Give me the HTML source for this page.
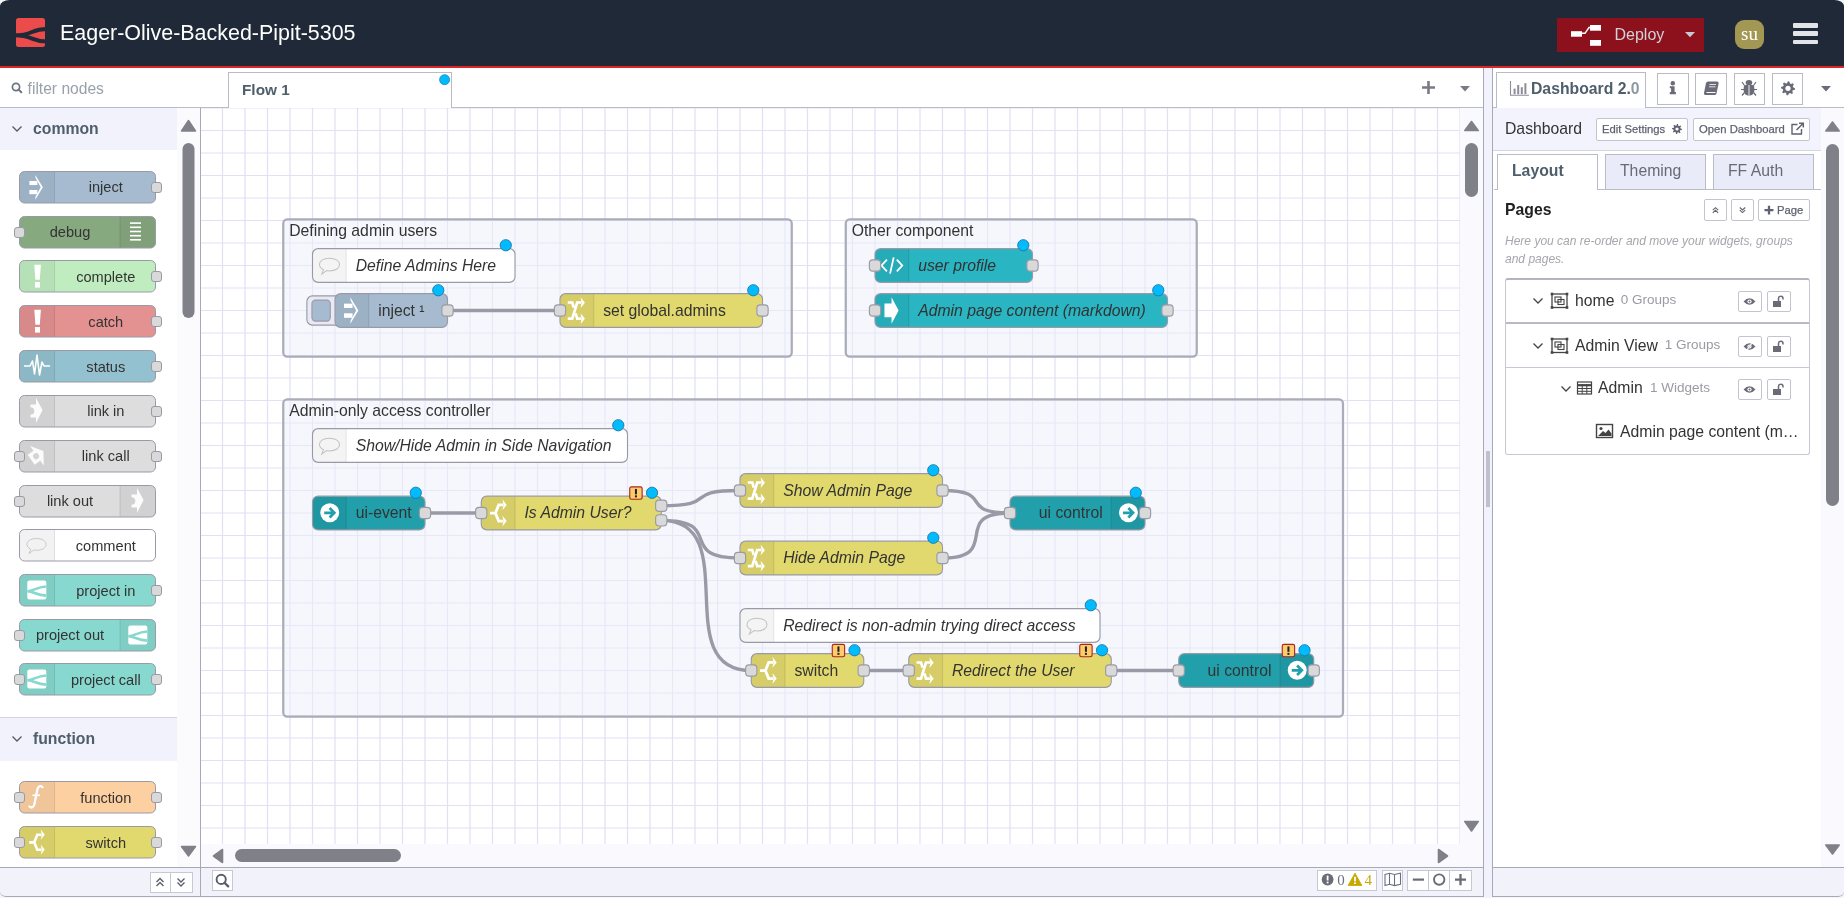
<!DOCTYPE html>
<html><head><meta charset="utf-8">
<style>

*{box-sizing:border-box;margin:0;padding:0}
html,body{width:1844px;height:898px;overflow:hidden;background:#f5f5f6;font-family:"Liberation Sans",sans-serif;color:#555}
.a{position:absolute}
#hdr{left:0;top:0;width:1844px;height:66px;background:#1f2937;border-radius:9.5px 9.5px 0 0 / 5.8px 5.8px 0 0}
#redl{left:0;top:66px;width:1844px;height:2px;background:#dc2626}
#title{left:60px;top:21.2px;font-size:21.45px;color:#fff;white-space:nowrap;letter-spacing:0}
/* palette */
#pal{left:0;top:108px;width:201px;height:759px;background:#fff;border-right:1px solid #a8a8b8}
#psearch{left:0;top:68px;width:201px;height:40px;background:#fff;border-bottom:1px solid #bbbbc8}
.cat{left:0;width:177px;background:#f3f3fa}
.cat span{position:absolute;left:33px;font-size:16px;font-weight:bold;color:#4f5b66}
.pn{position:absolute;left:19px;width:137px;height:32px;border:1px solid #999aa5;border-radius:5px}
.pn .ic{position:absolute;top:0;bottom:0;width:35px;background:rgba(0,0,0,0.05)}
.pn .lb{position:absolute;top:0;font-size:15.5px;color:#333;line-height:30px;white-space:nowrap}
.pt{position:absolute;width:11px;height:11px;background:#d9d9d9;border:1px solid #999aa5;border-radius:3px}
/* tabs */
#tabs{left:200px;top:68px;width:1283px;height:40px;background:#fff;border-bottom:1px solid #bbbbc8}
#tab1{left:228px;top:72px;width:224px;height:36px;background:#fff;border:1px solid #bbbbc8;border-bottom:none}
/* canvas */
#cv{left:201px;top:108px;width:1282px;height:759px;background:#fff;border-right:1px solid #a8a8b8}
#cfoot{left:201px;top:867px;width:1283px;height:30px;background:#f2f2fb;border-top:1px solid #a8a8b8;border-bottom:1px solid #a8a8b8}
#pfoot{left:0;top:867px;width:201px;height:30px;background:#f2f2fb;border-bottom-left-radius:6px 5px;border-top:1px solid #a8a8b8;border-bottom:1px solid #a8a8b8;border-right:1px solid #a8a8b8}
#sep{left:1483px;top:68px;width:10px;height:829px;background:#f1f2fb;border-left:1px solid #a8a8b8;border-right:1px solid #a8a8b8}
/* sidebar */
#sb{left:1493px;top:68px;width:351px;height:799px;background:#fff}
#sfoot{left:1493px;top:867px;width:351px;height:30px;background:#f2f2fb;border-bottom-right-radius:6px 5px;border-top:1px solid #a8a8b8;border-bottom:1px solid #a8a8b8}
.btn{position:absolute;background:#fff;border:1px solid #bbbbc8;border-radius:2px}

#pscroll{left:177px;top:108px;width:23px;height:759px;background:#fbfbfe}
</style></head><body>
<div id="root" style="position:absolute;left:0;top:0;width:1844px;height:898px;will-change:transform">

<div class="a" id="hdr"></div>
<div class="a" id="redl"></div>
<div class="a" id="title">Eager-Olive-Backed-Pipit-5305</div>

<svg class="a" style="left:0;top:0" width="60" height="66"><rect x="16" y="18" width="29" height="29" rx="2.5" fill="#ec4b4b"/><path d="M14,35.3 C34,35.3 30,29 47,29 M14,35.3 C34,35.3 30,41.4 47,41.4" stroke="#1f2937" stroke-width="4" fill="none"/></svg>
<div class="a" style="left:1557px;top:18px;width:147px;height:34px;background:#8c111c"></div>
<svg class="a" style="left:1557px;top:18px" width="147" height="34"><rect x="14" y="13.2" width="11" height="5.5" fill="#fff"/><rect x="33" y="7" width="11" height="5.7" fill="#fff"/><rect x="33" y="22" width="11" height="5.8" fill="#fff"/><path d="M25,15.3 L28,15.3 L32,9.5 L33.5,9.5" stroke="#fff" stroke-width="1.4" fill="none"/><path d="M128,14 L138,14 L133,19.2Z" fill="#c8c9d1"/></svg>
<div class="a" style="left:1614.5px;top:25px;font-size:16px;color:#d1d2d8;line-height:19px">Deploy</div>
<div class="a" style="left:1735px;top:20px;width:29px;height:29px;border-radius:9px;background:#a29853;color:#fff;font-family:'Liberation Serif',serif;font-size:19px;line-height:27px;text-align:center">su</div>
<div class="a" style="left:1793px;top:23px;width:25px;height:4.6px;background:#e3e4e8;border-radius:1px"></div>
<div class="a" style="left:1793px;top:31.3px;width:25px;height:4.6px;background:#e3e4e8;border-radius:1px"></div>
<div class="a" style="left:1793px;top:39.6px;width:25px;height:4.6px;background:#e3e4e8;border-radius:1px"></div>
<div class="a" id="pal"></div>
<div class="a" id="psearch"></div>
<div class="a" id="tabs"></div>
<div class="a" id="tab1"></div>
<div class="a" id="cv"></div>
<div class="a" id="pfoot"></div>
<div class="a" id="cfoot"></div>
<div class="a" id="sep"></div>
<div class="a" id="sb"></div>
<div class="a" id="sfoot"></div>
<div class="a" id="pscroll"></div>
<svg class="a" style="left:9px;top:80px" width="16" height="16"><circle cx="7" cy="7" r="3.6" fill="none" stroke="#6b7280" stroke-width="1.7"/><path d="M9.6,9.6 L12.3,12.3" stroke="#6b7280" stroke-width="2" stroke-linecap="round"/></svg>
<div class="a" style="left:27.6px;top:79.7px;font-size:15.6px;color:#9aa0aa;line-height:18px">filter nodes</div>
<div class="a" style="left:0;top:108px;width:177px;height:42px;background:#f2f2fc;"></div>
<svg class="a" style="left:10px;top:124px" width="14" height="10"><path d="M2.5,2.5 L7,7 L11.5,2.5" fill="none" stroke="#4f5b66" stroke-width="1.3"/></svg>
<div class="a" style="left:33px;top:119.8px;font-size:15.75px;font-weight:bold;color:#4e5e6a;line-height:18px">common</div>
<div class="a" style="left:0;top:717px;width:177px;height:44px;background:#f2f2fc;border-top:1px solid #d4d4e0;"></div>
<svg class="a" style="left:10px;top:734px" width="14" height="10"><path d="M2.5,2.5 L7,7 L11.5,2.5" fill="none" stroke="#4f5b66" stroke-width="1.3"/></svg>
<div class="a" style="left:33px;top:729.8px;font-size:15.75px;font-weight:bold;color:#4e5e6a;line-height:18px">function</div>
<svg class="a" style="left:19px;top:170.5px;overflow:visible" width="137" height="33"><rect x="0.5" y="0.5" width="136" height="31.5" rx="5" fill="#a6bbcf" stroke="#999aa6" stroke-width="1"/><path d="M5.5,1 L35.5,1 L35.5,31.5 L5.5,31.5 Q1,31.5 1,27 L1,5.5 Q1,1 5.5,1Z" fill="#000" fill-opacity="0.05"/><line x1="35.5" y1="1" x2="35.5" y2="31.5" stroke="#000" stroke-opacity="0.1" stroke-width="1"/><g><g transform="translate(2,0.6) scale(1.05)"><rect x="8" y="8.9" width="7.6" height="3.9" fill="#fff"/><rect x="8" y="17.5" width="7.6" height="4" fill="#fff"/><path d="M13.6,3.2 L20.8,15 L13.6,26.8 L13.9,23.8 L18.8,15 L13.9,6.2Z" fill="#fff"/></g></g></svg>
<div class="a" style="left:105.8px;top:178.0px;width:0;text-align:center"><span style="position:absolute;left:0;transform:translateX(-50%);white-space:nowrap;font-size:14.6px;color:#333;line-height:18px">inject</span></div>
<div class="a" style="left:151px;top:181.5px;width:11px;height:11px;background:#d9d9d9;border:1px solid #999aa6;border-radius:3px"></div>
<svg class="a" style="left:19px;top:215.6px;overflow:visible" width="137" height="33"><rect x="0.5" y="0.5" width="136" height="31.5" rx="5" fill="#87a980" stroke="#999aa6" stroke-width="1"/><path d="M101,1 L131.5,1 Q136,1 136,5.5 L136,27 Q136,31.5 131.5,31.5 L101,31.5Z" fill="#000" fill-opacity="0.05"/><line x1="101" y1="1" x2="101" y2="31.5" stroke="#000" stroke-opacity="0.1" stroke-width="1"/><g transform="translate(101,0)"><rect x="10" y="6.3" width="11" height="1.6" fill="#fff"/><rect x="10" y="10.5" width="11" height="1.6" fill="#fff"/><rect x="10" y="14.7" width="11" height="1.6" fill="#fff"/><rect x="10" y="18.9" width="11" height="1.6" fill="#fff"/><rect x="10" y="23.0" width="11" height="1.6" fill="#fff"/></g></svg>
<div class="a" style="left:70.0px;top:223.1px;width:0;text-align:center"><span style="position:absolute;left:0;transform:translateX(-50%);white-space:nowrap;font-size:14.6px;color:#333;line-height:18px">debug</span></div>
<div class="a" style="left:14px;top:226.6px;width:11px;height:11px;background:#d9d9d9;border:1px solid #999aa6;border-radius:3px"></div>
<svg class="a" style="left:19px;top:260.4px;overflow:visible" width="137" height="33"><rect x="0.5" y="0.5" width="136" height="31.5" rx="5" fill="#c0edc0" stroke="#999aa6" stroke-width="1"/><path d="M5.5,1 L35.5,1 L35.5,31.5 L5.5,31.5 Q1,31.5 1,27 L1,5.5 Q1,1 5.5,1Z" fill="#000" fill-opacity="0.05"/><line x1="35.5" y1="1" x2="35.5" y2="31.5" stroke="#000" stroke-opacity="0.1" stroke-width="1"/><g><path d="M15.3,4.7 L21.9,4.7 L20.8,19.8 L16.4,19.8Z" fill="#fff"/><rect x="16" y="22" width="5" height="5.6" fill="#fff"/></g></svg>
<div class="a" style="left:105.8px;top:267.9px;width:0;text-align:center"><span style="position:absolute;left:0;transform:translateX(-50%);white-space:nowrap;font-size:14.6px;color:#333;line-height:18px">complete</span></div>
<div class="a" style="left:151px;top:271.4px;width:11px;height:11px;background:#d9d9d9;border:1px solid #999aa6;border-radius:3px"></div>
<svg class="a" style="left:19px;top:305.3px;overflow:visible" width="137" height="33"><rect x="0.5" y="0.5" width="136" height="31.5" rx="5" fill="#e49191" stroke="#999aa6" stroke-width="1"/><path d="M5.5,1 L35.5,1 L35.5,31.5 L5.5,31.5 Q1,31.5 1,27 L1,5.5 Q1,1 5.5,1Z" fill="#000" fill-opacity="0.05"/><line x1="35.5" y1="1" x2="35.5" y2="31.5" stroke="#000" stroke-opacity="0.1" stroke-width="1"/><g><path d="M15.3,4.7 L21.9,4.7 L20.8,19.8 L16.4,19.8Z" fill="#fff"/><rect x="16" y="22" width="5" height="5.6" fill="#fff"/></g></svg>
<div class="a" style="left:105.8px;top:312.8px;width:0;text-align:center"><span style="position:absolute;left:0;transform:translateX(-50%);white-space:nowrap;font-size:14.6px;color:#333;line-height:18px">catch</span></div>
<div class="a" style="left:151px;top:316.3px;width:11px;height:11px;background:#d9d9d9;border:1px solid #999aa6;border-radius:3px"></div>
<svg class="a" style="left:19px;top:350.1px;overflow:visible" width="137" height="33"><rect x="0.5" y="0.5" width="136" height="31.5" rx="5" fill="#94c1d0" stroke="#999aa6" stroke-width="1"/><path d="M5.5,1 L35.5,1 L35.5,31.5 L5.5,31.5 Q1,31.5 1,27 L1,5.5 Q1,1 5.5,1Z" fill="#000" fill-opacity="0.05"/><line x1="35.5" y1="1" x2="35.5" y2="31.5" stroke="#000" stroke-opacity="0.1" stroke-width="1"/><g><polyline points="5,16 11,16 13.5,11 15.5,24 18,5 20.5,25 23,12 25,16 31,16" fill="none" stroke="#fff" stroke-width="1.6" stroke-linejoin="round"/></g></svg>
<div class="a" style="left:105.8px;top:357.6px;width:0;text-align:center"><span style="position:absolute;left:0;transform:translateX(-50%);white-space:nowrap;font-size:14.6px;color:#333;line-height:18px">status</span></div>
<div class="a" style="left:151px;top:361.1px;width:11px;height:11px;background:#d9d9d9;border:1px solid #999aa6;border-radius:3px"></div>
<svg class="a" style="left:19px;top:394.9px;overflow:visible" width="137" height="33"><rect x="0.5" y="0.5" width="136" height="31.5" rx="5" fill="#dddddd" stroke="#999aa6" stroke-width="1"/><path d="M5.5,1 L35.5,1 L35.5,31.5 L5.5,31.5 Q1,31.5 1,27 L1,5.5 Q1,1 5.5,1Z" fill="#000" fill-opacity="0.05"/><line x1="35.5" y1="1" x2="35.5" y2="31.5" stroke="#000" stroke-opacity="0.1" stroke-width="1"/><g><path d="M17,3 L23.6,15 L17,28 L17,22.5 L11.5,22.5 L11.5,19.8 A3.8,3.8 0 0 0 11.5,12.2 L11.5,9.4 L17,9.4Z" fill="#fff" opacity="0.92"/></g></svg>
<div class="a" style="left:105.8px;top:402.4px;width:0;text-align:center"><span style="position:absolute;left:0;transform:translateX(-50%);white-space:nowrap;font-size:14.6px;color:#333;line-height:18px">link in</span></div>
<div class="a" style="left:151px;top:405.9px;width:11px;height:11px;background:#d9d9d9;border:1px solid #999aa6;border-radius:3px"></div>
<svg class="a" style="left:19px;top:439.7px;overflow:visible" width="137" height="33"><rect x="0.5" y="0.5" width="136" height="31.5" rx="5" fill="#dddddd" stroke="#999aa6" stroke-width="1"/><path d="M5.5,1 L35.5,1 L35.5,31.5 L5.5,31.5 Q1,31.5 1,27 L1,5.5 Q1,1 5.5,1Z" fill="#000" fill-opacity="0.05"/><line x1="35.5" y1="1" x2="35.5" y2="31.5" stroke="#000" stroke-opacity="0.1" stroke-width="1"/><g><g transform="rotate(-35 17.5 16)"><path d="M18,4 L26,16 L18,28 L18,22 L11,22 L11,10 L18,10Z" fill="#fff" opacity="0.9"/><circle cx="17" cy="16" r="3" fill="#d4d4d4"/></g></g></svg>
<div class="a" style="left:105.8px;top:447.2px;width:0;text-align:center"><span style="position:absolute;left:0;transform:translateX(-50%);white-space:nowrap;font-size:14.6px;color:#333;line-height:18px">link call</span></div>
<div class="a" style="left:14px;top:450.7px;width:11px;height:11px;background:#d9d9d9;border:1px solid #999aa6;border-radius:3px"></div>
<div class="a" style="left:151px;top:450.7px;width:11px;height:11px;background:#d9d9d9;border:1px solid #999aa6;border-radius:3px"></div>
<svg class="a" style="left:19px;top:484.5px;overflow:visible" width="137" height="33"><rect x="0.5" y="0.5" width="136" height="31.5" rx="5" fill="#dddddd" stroke="#999aa6" stroke-width="1"/><path d="M101,1 L131.5,1 Q136,1 136,5.5 L136,27 Q136,31.5 131.5,31.5 L101,31.5Z" fill="#000" fill-opacity="0.05"/><line x1="101" y1="1" x2="101" y2="31.5" stroke="#000" stroke-opacity="0.1" stroke-width="1"/><g transform="translate(101,0)"><path d="M17,3 L23.6,15 L17,28 L17,22.5 L11.5,22.5 L11.5,19.8 A3.8,3.8 0 0 0 11.5,12.2 L11.5,9.4 L17,9.4Z" fill="#fff" opacity="0.92"/></g></svg>
<div class="a" style="left:70.0px;top:492.0px;width:0;text-align:center"><span style="position:absolute;left:0;transform:translateX(-50%);white-space:nowrap;font-size:14.6px;color:#333;line-height:18px">link out</span></div>
<div class="a" style="left:14px;top:495.5px;width:11px;height:11px;background:#d9d9d9;border:1px solid #999aa6;border-radius:3px"></div>
<svg class="a" style="left:19px;top:529.3px;overflow:visible" width="137" height="33"><rect x="0.5" y="0.5" width="136" height="31.5" rx="5" fill="#ffffff" stroke="#999aa6" stroke-width="1"/><path d="M5.5,1 L35.5,1 L35.5,31.5 L5.5,31.5 Q1,31.5 1,27 L1,5.5 Q1,1 5.5,1Z" fill="#000" fill-opacity="0.05"/><line x1="35.5" y1="1" x2="35.5" y2="31.5" stroke="#000" stroke-opacity="0.1" stroke-width="1"/><g><path d="M17.5,9.5 C24,9.5 27,12.5 27,15.5 C27,18.5 23.5,21.3 17.5,21.3 C16.5,21.3 15.6,21.2 14.8,21 L10,24.5 L11.8,20.2 C9.3,19 8,17.4 8,15.5 C8,12.5 11,9.5 17.5,9.5Z" fill="none" stroke="#c8c8c8" stroke-width="1"/></g></svg>
<div class="a" style="left:105.8px;top:536.8px;width:0;text-align:center"><span style="position:absolute;left:0;transform:translateX(-50%);white-space:nowrap;font-size:14.6px;color:#333;line-height:18px">comment</span></div>
<svg class="a" style="left:19px;top:574.0px;overflow:visible" width="137" height="33"><rect x="0.5" y="0.5" width="136" height="31.5" rx="5" fill="#87d8cf" stroke="#999aa6" stroke-width="1"/><path d="M5.5,1 L35.5,1 L35.5,31.5 L5.5,31.5 Q1,31.5 1,27 L1,5.5 Q1,1 5.5,1Z" fill="#000" fill-opacity="0.05"/><line x1="35.5" y1="1" x2="35.5" y2="31.5" stroke="#000" stroke-opacity="0.1" stroke-width="1"/><g><rect x="8.3" y="6.6" width="19" height="19" rx="2" fill="#fff"/><path d="M8.3,17.2 C14.5,17.2 17,13 27.3,12.5 M8.3,17.2 C14.5,17.2 17,21 27.3,21.6" stroke="#87d8cf" stroke-width="2.6" fill="none"/></g></svg>
<div class="a" style="left:105.8px;top:581.5px;width:0;text-align:center"><span style="position:absolute;left:0;transform:translateX(-50%);white-space:nowrap;font-size:14.6px;color:#333;line-height:18px">project in</span></div>
<div class="a" style="left:151px;top:585.0px;width:11px;height:11px;background:#d9d9d9;border:1px solid #999aa6;border-radius:3px"></div>
<svg class="a" style="left:19px;top:618.6px;overflow:visible" width="137" height="33"><rect x="0.5" y="0.5" width="136" height="31.5" rx="5" fill="#87d8cf" stroke="#999aa6" stroke-width="1"/><path d="M101,1 L131.5,1 Q136,1 136,5.5 L136,27 Q136,31.5 131.5,31.5 L101,31.5Z" fill="#000" fill-opacity="0.05"/><line x1="101" y1="1" x2="101" y2="31.5" stroke="#000" stroke-opacity="0.1" stroke-width="1"/><g transform="translate(101,0)"><rect x="8.3" y="6.6" width="19" height="19" rx="2" fill="#fff"/><path d="M8.3,17.2 C14.5,17.2 17,13 27.3,12.5 M8.3,17.2 C14.5,17.2 17,21 27.3,21.6" stroke="#87d8cf" stroke-width="2.6" fill="none"/></g></svg>
<div class="a" style="left:70.0px;top:626.1px;width:0;text-align:center"><span style="position:absolute;left:0;transform:translateX(-50%);white-space:nowrap;font-size:14.6px;color:#333;line-height:18px">project out</span></div>
<div class="a" style="left:14px;top:629.6px;width:11px;height:11px;background:#d9d9d9;border:1px solid #999aa6;border-radius:3px"></div>
<svg class="a" style="left:19px;top:663.4px;overflow:visible" width="137" height="33"><rect x="0.5" y="0.5" width="136" height="31.5" rx="5" fill="#87d8cf" stroke="#999aa6" stroke-width="1"/><path d="M5.5,1 L35.5,1 L35.5,31.5 L5.5,31.5 Q1,31.5 1,27 L1,5.5 Q1,1 5.5,1Z" fill="#000" fill-opacity="0.05"/><line x1="35.5" y1="1" x2="35.5" y2="31.5" stroke="#000" stroke-opacity="0.1" stroke-width="1"/><g><rect x="8.3" y="6.6" width="19" height="19" rx="2" fill="#fff"/><path d="M8.3,17.2 C14.5,17.2 17,13 27.3,12.5 M8.3,17.2 C14.5,17.2 17,21 27.3,21.6" stroke="#87d8cf" stroke-width="2.6" fill="none"/></g></svg>
<div class="a" style="left:105.8px;top:670.9px;width:0;text-align:center"><span style="position:absolute;left:0;transform:translateX(-50%);white-space:nowrap;font-size:14.6px;color:#333;line-height:18px">project call</span></div>
<div class="a" style="left:14px;top:674.4px;width:11px;height:11px;background:#d9d9d9;border:1px solid #999aa6;border-radius:3px"></div>
<div class="a" style="left:151px;top:674.4px;width:11px;height:11px;background:#d9d9d9;border:1px solid #999aa6;border-radius:3px"></div>
<svg class="a" style="left:19px;top:781.2px;overflow:visible" width="137" height="33"><rect x="0.5" y="0.5" width="136" height="31.5" rx="5" fill="#fdd0a2" stroke="#999aa6" stroke-width="1"/><path d="M5.5,1 L35.5,1 L35.5,31.5 L5.5,31.5 Q1,31.5 1,27 L1,5.5 Q1,1 5.5,1Z" fill="#000" fill-opacity="0.05"/><line x1="35.5" y1="1" x2="35.5" y2="31.5" stroke="#000" stroke-opacity="0.1" stroke-width="1"/><g><path d="M23.5,6.2 C21.8,4.3 19.3,5 18.5,8 L15.3,23.5 C14.6,26.5 12.3,27.3 10.5,25.5" fill="none" stroke="#fff" stroke-width="2.3" stroke-linecap="round"/><path d="M13.5,14.3 L21,14.3" stroke="#fff" stroke-width="1.8"/></g></svg>
<div class="a" style="left:105.8px;top:788.7px;width:0;text-align:center"><span style="position:absolute;left:0;transform:translateX(-50%);white-space:nowrap;font-size:14.6px;color:#333;line-height:18px">function</span></div>
<div class="a" style="left:14px;top:792.2px;width:11px;height:11px;background:#d9d9d9;border:1px solid #999aa6;border-radius:3px"></div>
<div class="a" style="left:151px;top:792.2px;width:11px;height:11px;background:#d9d9d9;border:1px solid #999aa6;border-radius:3px"></div>
<svg class="a" style="left:19px;top:826.3px;overflow:visible" width="137" height="33"><rect x="0.5" y="0.5" width="136" height="31.5" rx="5" fill="#e2d96e" stroke="#999aa6" stroke-width="1"/><path d="M5.5,1 L35.5,1 L35.5,31.5 L5.5,31.5 Q1,31.5 1,27 L1,5.5 Q1,1 5.5,1Z" fill="#000" fill-opacity="0.05"/><line x1="35.5" y1="1" x2="35.5" y2="31.5" stroke="#000" stroke-opacity="0.1" stroke-width="1"/><g><g transform="translate(2,0.5) scale(1.05)"><path d="M7.8,15.1 L12.6,15.1 L15.5,7.8 L19.5,7.8 M12.6,15.1 L15.5,22.2 L19.5,22.2" fill="none" stroke="#fff" stroke-width="2.5"/><path d="M18.8,2.8 L22.6,7.8 L18.8,12.6 L19.8,7.8Z M18.8,17.2 L22.6,22.2 L18.8,27 L19.8,22.2Z" fill="#fff"/></g></g></svg>
<div class="a" style="left:105.8px;top:833.8px;width:0;text-align:center"><span style="position:absolute;left:0;transform:translateX(-50%);white-space:nowrap;font-size:14.6px;color:#333;line-height:18px">switch</span></div>
<div class="a" style="left:14px;top:837.3px;width:11px;height:11px;background:#d9d9d9;border:1px solid #999aa6;border-radius:3px"></div>
<div class="a" style="left:151px;top:837.3px;width:11px;height:11px;background:#d9d9d9;border:1px solid #999aa6;border-radius:3px"></div>
<svg class="a" style="left:177px;top:108px" width="23" height="759"><path d="M11.5,12.5 L18.5,23 L4.5,23Z" fill="#808089" stroke="#808089" stroke-width="1.5" stroke-linejoin="round"/><rect x="5.5" y="35" width="12" height="175" rx="6" fill="#808089"/><path d="M4.5,738.5 L18.5,738.5 L11.5,748Z" fill="#808089" stroke="#808089" stroke-width="1.5" stroke-linejoin="round"/></svg>
<div class="a" style="left:150px;top:872px;width:42.5px;height:20.5px;background:#fff;border:1px solid #c8c8d4"></div><div class="a" style="left:170px;top:872px;width:1px;height:20.5px;background:#c8c8d4"></div>
<svg class="a" style="left:150px;top:872px" width="43" height="21"><path d="M6.5,10 L10,6.5 L13.5,10 M6.5,14 L10,10.5 L13.5,14" fill="none" stroke="#555e6a" stroke-width="1.3"/><path d="M27.5,6.5 L31,10 L34.5,6.5 M27.5,10.5 L31,14 L34.5,10.5" fill="none" stroke="#555e6a" stroke-width="1.3"/></svg>
<svg class="a" style="left:200px;top:108px;font-family:'Liberation Sans',sans-serif" width="1260" height="736"><g transform="scale(1.125)"><path d="M20 0V654 M40 0V654 M60 0V654 M80 0V654 M100 0V654 M120 0V654 M140 0V654 M160 0V654 M180 0V654 M200 0V654 M220 0V654 M240 0V654 M260 0V654 M280 0V654 M300 0V654 M320 0V654 M340 0V654 M360 0V654 M380 0V654 M400 0V654 M420 0V654 M440 0V654 M460 0V654 M480 0V654 M500 0V654 M520 0V654 M540 0V654 M560 0V654 M580 0V654 M600 0V654 M620 0V654 M640 0V654 M660 0V654 M680 0V654 M700 0V654 M720 0V654 M740 0V654 M760 0V654 M780 0V654 M800 0V654 M820 0V654 M840 0V654 M860 0V654 M880 0V654 M900 0V654 M920 0V654 M940 0V654 M960 0V654 M980 0V654 M1000 0V654 M1020 0V654 M1040 0V654 M1060 0V654 M1080 0V654 M1100 0V654 M1120 0V654 M0.9 0H1120 M0.9 20H1120 M0.9 40H1120 M0.9 60H1120 M0.9 80H1120 M0.9 100H1120 M0.9 120H1120 M0.9 140H1120 M0.9 160H1120 M0.9 180H1120 M0.9 200H1120 M0.9 220H1120 M0.9 240H1120 M0.9 260H1120 M0.9 280H1120 M0.9 300H1120 M0.9 320H1120 M0.9 340H1120 M0.9 360H1120 M0.9 380H1120 M0.9 400H1120 M0.9 420H1120 M0.9 440H1120 M0.9 460H1120 M0.9 480H1120 M0.9 500H1120 M0.9 520H1120 M0.9 540H1120 M0.9 560H1120 M0.9 580H1120 M0.9 600H1120 M0.9 620H1120 M0.9 640H1120" stroke="#e0e1f4" stroke-width="1.08" fill="none"/><rect x="74" y="99" width="452" height="122" rx="3.6" fill="rgb(237,239,249)" fill-opacity="0.5" stroke="#abacb9" stroke-width="2"/><text x="79.3" y="113.6" font-size="14" fill="#333">Defining admin users</text><rect x="574" y="99" width="312" height="122" rx="3.6" fill="rgb(237,239,249)" fill-opacity="0.5" stroke="#abacb9" stroke-width="2"/><text x="579.3" y="113.6" font-size="14" fill="#333">Other component</text><rect x="74" y="259" width="942" height="282" rx="3.6" fill="rgb(237,239,249)" fill-opacity="0.5" stroke="#abacb9" stroke-width="2"/><text x="79.3" y="273.6" font-size="14" fill="#333">Admin-only access controller</text><path d="M220 180 C295 180 245 180 320 180" fill="none" stroke="#999aa6" stroke-width="3"/><path d="M200 360 C237.5 360 212.5 360 250 360" fill="none" stroke="#999aa6" stroke-width="3"/><path d="M410 353.5 C463.467 353.5 426.533 340 480 340" fill="none" stroke="#999aa6" stroke-width="3"/><path d="M410 366.5 C468.202 366.5 421.798 400 480 400" fill="none" stroke="#999aa6" stroke-width="3"/><path d="M410 366.5 C485 366.5 415 500 490 500" fill="none" stroke="#999aa6" stroke-width="3"/><path d="M660 340 C707.434 340 672.566 360 720 360" fill="none" stroke="#999aa6" stroke-width="3"/><path d="M660 400 C714.083 400 665.917 360 720 360" fill="none" stroke="#999aa6" stroke-width="3"/><path d="M590 500 C620 500 600 500 630 500" fill="none" stroke="#999aa6" stroke-width="3"/><path d="M810 500 C855 500 825 500 870 500" fill="none" stroke="#999aa6" stroke-width="3"/><g transform="translate(100,125)"><rect x="0" y="0" width="180" height="30" rx="5" fill="#fff" stroke="#999aa6" stroke-width="1"/><path d="M5,0.5 L30,0.5 L30,29.5 L5,29.5 Q0.5,29.5 0.5,25 L0.5,5 Q0.5,0.5 5,0.5Z" fill="#000" fill-opacity="0.045"/><line x1="30" y1="0.5" x2="30" y2="29.5" stroke="#000" stroke-opacity="0.08" stroke-width="1"/><path d="M15,8.5 C21,8.5 24,11.2 24,14.2 C24,17.2 21,19.8 15,19.8 C14.1,19.8 13.3,19.7 12.6,19.5 L8.3,22.6 L9.8,18.8 C7.5,17.7 6.2,16.1 6.2,14.2 C6.2,11.2 9.2,8.5 15,8.5Z" fill="none" stroke="#c2c2c2" stroke-width="0.9"/><text x="38.4" y="19.9" font-size="14" fill="#333" font-style="italic">Define Admins Here</text><circle cx="171.80" cy="-3.00" r="5" fill="#00bcff" stroke="#1877a8" stroke-width="0.8"/></g><g transform="translate(120,165)"><rect x="-25" y="2" width="32" height="26" rx="5" fill="#e8e9f5" stroke="#999aa6" stroke-width="1"/><rect x="-20.5" y="5.8" width="16.3" height="18.6" rx="3.2" fill="#a6bbcf" stroke="#999aa6" stroke-width="1"/></g><g transform="translate(120,165)"><rect x="0" y="0" width="100" height="30" rx="5" fill="#a6bbcf" stroke="#999aa6" stroke-width="1"/><path d="M5,0.5 L30,0.5 L30,29.5 L5,29.5 Q0.5,29.5 0.5,25 L0.5,5 Q0.5,0.5 5,0.5Z" fill="#000" fill-opacity="0.05"/><line x1="30" y1="0.5" x2="30" y2="29.5" stroke="#000" stroke-opacity="0.1" stroke-width="1"/><rect x="8" y="8.9" width="7.6" height="3.9" fill="#fff"/><rect x="8" y="17.5" width="7.6" height="4" fill="#fff"/><path d="M13.6,3.2 L20.8,15 L13.6,26.8 L13.9,23.8 L18.8,15 L13.9,6.2Z" fill="#fff"/><text x="38.4" y="19.5" font-size="14" fill="#333">inject ¹</text><rect x="95.00" y="10.00" width="10" height="10" rx="3" fill="#d9d9d9" stroke="#999aa6" stroke-width="1"/><circle cx="91.80" cy="-3.00" r="5" fill="#00bcff" stroke="#1877a8" stroke-width="0.8"/></g><g transform="translate(320,165)"><rect x="0" y="0" width="180" height="30" rx="5" fill="#e2d96e" stroke="#999aa6" stroke-width="1"/><path d="M5,0.5 L30,0.5 L30,29.5 L5,29.5 Q0.5,29.5 0.5,25 L0.5,5 Q0.5,0.5 5,0.5Z" fill="#000" fill-opacity="0.05"/><line x1="30" y1="0.5" x2="30" y2="29.5" stroke="#000" stroke-opacity="0.1" stroke-width="1"/><path d="M6.9,22.3 L10.9,22.3 L15.3,7.9 L19,7.9" fill="none" stroke="#fff" stroke-width="2.4"/><path d="M6.9,7.9 L10.9,7.9 L12.3,12.5 M13.9,17.6 L15.3,22.3 L19,22.3" fill="none" stroke="#fff" stroke-width="2.4"/><path d="M18.3,3.2 L22.2,8 L18.3,12.8 L19.2,8Z M18.3,17.5 L22.2,22.3 L18.3,27.1 L19.2,22.3Z" fill="#fff"/><text x="38.4" y="19.5" font-size="14" fill="#333">set global.admins</text><rect x="-5.00" y="10.00" width="10" height="10" rx="3" fill="#d9d9d9" stroke="#999aa6" stroke-width="1"/><rect x="175.00" y="10.00" width="10" height="10" rx="3" fill="#d9d9d9" stroke="#999aa6" stroke-width="1"/><circle cx="171.80" cy="-3.00" r="5" fill="#00bcff" stroke="#1877a8" stroke-width="0.8"/></g><g transform="translate(600,125)"><rect x="0" y="0" width="140" height="30" rx="5" fill="#29b5c2" stroke="#999aa6" stroke-width="1"/><path d="M5,0.5 L30,0.5 L30,29.5 L5,29.5 Q0.5,29.5 0.5,25 L0.5,5 Q0.5,0.5 5,0.5Z" fill="#000" fill-opacity="0.05"/><line x1="30" y1="0.5" x2="30" y2="29.5" stroke="#000" stroke-opacity="0.1" stroke-width="1"/><path d="M10.6,9.8 L5.8,15 L10.6,20.2 M19.4,9.8 L24.2,15 L19.4,20.2 M16.6,7.8 L13.4,22.2" fill="none" stroke="#fff" stroke-width="1.6"/><text x="38.4" y="19.5" font-size="14" fill="#333" font-style="italic">user profile</text><rect x="-5.00" y="10.00" width="10" height="10" rx="3" fill="#d9d9d9" stroke="#999aa6" stroke-width="1"/><rect x="135.00" y="10.00" width="10" height="10" rx="3" fill="#d9d9d9" stroke="#999aa6" stroke-width="1"/><circle cx="131.80" cy="-3.00" r="5" fill="#00bcff" stroke="#1877a8" stroke-width="0.8"/></g><g transform="translate(600,165)"><rect x="0" y="0" width="260" height="30" rx="5" fill="#29b5c2" stroke="#999aa6" stroke-width="1"/><path d="M5,0.5 L30,0.5 L30,29.5 L5,29.5 Q0.5,29.5 0.5,25 L0.5,5 Q0.5,0.5 5,0.5Z" fill="#000" fill-opacity="0.05"/><line x1="30" y1="0.5" x2="30" y2="29.5" stroke="#000" stroke-opacity="0.1" stroke-width="1"/><path d="M8.4,8.8 L14.7,8.8 L14.7,3.2 L21,15 L14.7,26.8 L14.7,21 L8.4,21Z" fill="#fff"/><text x="38.4" y="19.5" font-size="14" fill="#333" font-style="italic">Admin page content (markdown)</text><rect x="-5.00" y="10.00" width="10" height="10" rx="3" fill="#d9d9d9" stroke="#999aa6" stroke-width="1"/><rect x="255.00" y="10.00" width="10" height="10" rx="3" fill="#d9d9d9" stroke="#999aa6" stroke-width="1"/><circle cx="251.80" cy="-3.00" r="5" fill="#00bcff" stroke="#1877a8" stroke-width="0.8"/></g><g transform="translate(100,285)"><rect x="0" y="0" width="280" height="30" rx="5" fill="#fff" stroke="#999aa6" stroke-width="1"/><path d="M5,0.5 L30,0.5 L30,29.5 L5,29.5 Q0.5,29.5 0.5,25 L0.5,5 Q0.5,0.5 5,0.5Z" fill="#000" fill-opacity="0.045"/><line x1="30" y1="0.5" x2="30" y2="29.5" stroke="#000" stroke-opacity="0.08" stroke-width="1"/><path d="M15,8.5 C21,8.5 24,11.2 24,14.2 C24,17.2 21,19.8 15,19.8 C14.1,19.8 13.3,19.7 12.6,19.5 L8.3,22.6 L9.8,18.8 C7.5,17.7 6.2,16.1 6.2,14.2 C6.2,11.2 9.2,8.5 15,8.5Z" fill="none" stroke="#c2c2c2" stroke-width="0.9"/><text x="38.4" y="19.9" font-size="14" fill="#333" font-style="italic">Show/Hide Admin in Side Navigation</text><circle cx="271.80" cy="-3.00" r="5" fill="#00bcff" stroke="#1877a8" stroke-width="0.8"/></g><g transform="translate(100,345)"><rect x="0" y="0" width="100" height="30" rx="5" fill="#21a0ab" stroke="#999aa6" stroke-width="1"/><path d="M5,0.5 L30,0.5 L30,29.5 L5,29.5 Q0.5,29.5 0.5,25 L0.5,5 Q0.5,0.5 5,0.5Z" fill="#000" fill-opacity="0.05"/><line x1="30" y1="0.5" x2="30" y2="29.5" stroke="#000" stroke-opacity="0.1" stroke-width="1"/><circle cx="15.3" cy="14.8" r="8.4" fill="#fff"/><path d="M10.4,14.8 L19.2,14.8 M15.2,10.6 L19.4,14.8 L15.2,19" fill="none" stroke="#21a0ab" stroke-width="2.4" stroke-linejoin="miter"/><text x="38.4" y="19.5" font-size="14" fill="#333">ui-event</text><rect x="95.00" y="10.00" width="10" height="10" rx="3" fill="#d9d9d9" stroke="#999aa6" stroke-width="1"/><circle cx="91.80" cy="-3.00" r="5" fill="#00bcff" stroke="#1877a8" stroke-width="0.8"/></g><g transform="translate(250,345)"><rect x="0" y="0" width="160" height="30" rx="5" fill="#e2d96e" stroke="#999aa6" stroke-width="1"/><path d="M5,0.5 L30,0.5 L30,29.5 L5,29.5 Q0.5,29.5 0.5,25 L0.5,5 Q0.5,0.5 5,0.5Z" fill="#000" fill-opacity="0.05"/><line x1="30" y1="0.5" x2="30" y2="29.5" stroke="#000" stroke-opacity="0.1" stroke-width="1"/><path d="M7.8,15.1 L12.6,15.1 L15.5,7.8 L19.5,7.8 M12.6,15.1 L15.5,22.2 L19.5,22.2" fill="none" stroke="#fff" stroke-width="2.5" stroke-linejoin="miter"/><path d="M18.8,2.8 L22.6,7.8 L18.8,12.6 L19.8,7.8Z M18.8,17.2 L22.6,22.2 L18.8,27 L19.8,22.2Z" fill="#fff"/><text x="38.4" y="19.5" font-size="14" fill="#333" font-style="italic">Is Admin User?</text><rect x="-5.00" y="10.00" width="10" height="10" rx="3" fill="#d9d9d9" stroke="#999aa6" stroke-width="1"/><rect x="155.00" y="3.50" width="10" height="10" rx="3" fill="#d9d9d9" stroke="#999aa6" stroke-width="1"/><rect x="155.00" y="16.50" width="10" height="10" rx="3" fill="#d9d9d9" stroke="#999aa6" stroke-width="1"/><g transform="translate(132.00,-8.20)"><rect x="0" y="0" width="11" height="11" rx="1.5" fill="#ffcb6b" stroke="#a8261c" stroke-width="1"/><rect x="4.6" y="1.8" width="1.8" height="4.8" fill="#222"/><rect x="4.6" y="7.5" width="1.8" height="1.8" fill="#222"/></g><circle cx="151.80" cy="-3.00" r="5" fill="#00bcff" stroke="#1877a8" stroke-width="0.8"/></g><g transform="translate(480,325)"><rect x="0" y="0" width="180" height="30" rx="5" fill="#e2d96e" stroke="#999aa6" stroke-width="1"/><path d="M5,0.5 L30,0.5 L30,29.5 L5,29.5 Q0.5,29.5 0.5,25 L0.5,5 Q0.5,0.5 5,0.5Z" fill="#000" fill-opacity="0.05"/><line x1="30" y1="0.5" x2="30" y2="29.5" stroke="#000" stroke-opacity="0.1" stroke-width="1"/><path d="M6.9,22.3 L10.9,22.3 L15.3,7.9 L19,7.9" fill="none" stroke="#fff" stroke-width="2.4"/><path d="M6.9,7.9 L10.9,7.9 L12.3,12.5 M13.9,17.6 L15.3,22.3 L19,22.3" fill="none" stroke="#fff" stroke-width="2.4"/><path d="M18.3,3.2 L22.2,8 L18.3,12.8 L19.2,8Z M18.3,17.5 L22.2,22.3 L18.3,27.1 L19.2,22.3Z" fill="#fff"/><text x="38.4" y="19.5" font-size="14" fill="#333" font-style="italic">Show Admin Page</text><rect x="-5.00" y="10.00" width="10" height="10" rx="3" fill="#d9d9d9" stroke="#999aa6" stroke-width="1"/><rect x="175.00" y="10.00" width="10" height="10" rx="3" fill="#d9d9d9" stroke="#999aa6" stroke-width="1"/><circle cx="171.80" cy="-3.00" r="5" fill="#00bcff" stroke="#1877a8" stroke-width="0.8"/></g><g transform="translate(480,385)"><rect x="0" y="0" width="180" height="30" rx="5" fill="#e2d96e" stroke="#999aa6" stroke-width="1"/><path d="M5,0.5 L30,0.5 L30,29.5 L5,29.5 Q0.5,29.5 0.5,25 L0.5,5 Q0.5,0.5 5,0.5Z" fill="#000" fill-opacity="0.05"/><line x1="30" y1="0.5" x2="30" y2="29.5" stroke="#000" stroke-opacity="0.1" stroke-width="1"/><path d="M6.9,22.3 L10.9,22.3 L15.3,7.9 L19,7.9" fill="none" stroke="#fff" stroke-width="2.4"/><path d="M6.9,7.9 L10.9,7.9 L12.3,12.5 M13.9,17.6 L15.3,22.3 L19,22.3" fill="none" stroke="#fff" stroke-width="2.4"/><path d="M18.3,3.2 L22.2,8 L18.3,12.8 L19.2,8Z M18.3,17.5 L22.2,22.3 L18.3,27.1 L19.2,22.3Z" fill="#fff"/><text x="38.4" y="19.5" font-size="14" fill="#333" font-style="italic">Hide Admin Page</text><rect x="-5.00" y="10.00" width="10" height="10" rx="3" fill="#d9d9d9" stroke="#999aa6" stroke-width="1"/><rect x="175.00" y="10.00" width="10" height="10" rx="3" fill="#d9d9d9" stroke="#999aa6" stroke-width="1"/><circle cx="171.80" cy="-3.00" r="5" fill="#00bcff" stroke="#1877a8" stroke-width="0.8"/></g><g transform="translate(720,345)"><rect x="0" y="0" width="120" height="30" rx="5" fill="#21a0ab" stroke="#999aa6" stroke-width="1"/><path d="M90,0.5 L115,0.5 Q119.5,0.5 119.5,5 L119.5,25 Q119.5,29.5 115,29.5 L90,29.5Z" fill="#000" fill-opacity="0.05"/><line x1="90" y1="0.5" x2="90" y2="29.5" stroke="#000" stroke-opacity="0.1" stroke-width="1"/><g transform="translate(90,0)"><circle cx="15.3" cy="14.8" r="8.4" fill="#fff"/><path d="M10.4,14.8 L19.2,14.8 M15.2,10.6 L19.4,14.8 L15.2,19" fill="none" stroke="#21a0ab" stroke-width="2.4" stroke-linejoin="miter"/></g><text x="82.4" y="19.5" font-size="14" fill="#333" text-anchor="end">ui control</text><rect x="-5.00" y="10.00" width="10" height="10" rx="3" fill="#d9d9d9" stroke="#999aa6" stroke-width="1"/><rect x="115.00" y="10.00" width="10" height="10" rx="3" fill="#d9d9d9" stroke="#999aa6" stroke-width="1"/><circle cx="111.80" cy="-3.00" r="5" fill="#00bcff" stroke="#1877a8" stroke-width="0.8"/></g><g transform="translate(480,445)"><rect x="0" y="0" width="320" height="30" rx="5" fill="#fff" stroke="#999aa6" stroke-width="1"/><path d="M5,0.5 L30,0.5 L30,29.5 L5,29.5 Q0.5,29.5 0.5,25 L0.5,5 Q0.5,0.5 5,0.5Z" fill="#000" fill-opacity="0.045"/><line x1="30" y1="0.5" x2="30" y2="29.5" stroke="#000" stroke-opacity="0.08" stroke-width="1"/><path d="M15,8.5 C21,8.5 24,11.2 24,14.2 C24,17.2 21,19.8 15,19.8 C14.1,19.8 13.3,19.7 12.6,19.5 L8.3,22.6 L9.8,18.8 C7.5,17.7 6.2,16.1 6.2,14.2 C6.2,11.2 9.2,8.5 15,8.5Z" fill="none" stroke="#c2c2c2" stroke-width="0.9"/><text x="38.4" y="19.9" font-size="14" fill="#333" font-style="italic">Redirect is non-admin trying direct access</text><circle cx="311.80" cy="-3.00" r="5" fill="#00bcff" stroke="#1877a8" stroke-width="0.8"/></g><g transform="translate(490,485)"><rect x="0" y="0" width="100" height="30" rx="5" fill="#e2d96e" stroke="#999aa6" stroke-width="1"/><path d="M5,0.5 L30,0.5 L30,29.5 L5,29.5 Q0.5,29.5 0.5,25 L0.5,5 Q0.5,0.5 5,0.5Z" fill="#000" fill-opacity="0.05"/><line x1="30" y1="0.5" x2="30" y2="29.5" stroke="#000" stroke-opacity="0.1" stroke-width="1"/><path d="M7.8,15.1 L12.6,15.1 L15.5,7.8 L19.5,7.8 M12.6,15.1 L15.5,22.2 L19.5,22.2" fill="none" stroke="#fff" stroke-width="2.5" stroke-linejoin="miter"/><path d="M18.8,2.8 L22.6,7.8 L18.8,12.6 L19.8,7.8Z M18.8,17.2 L22.6,22.2 L18.8,27 L19.8,22.2Z" fill="#fff"/><text x="38.4" y="19.5" font-size="14" fill="#333">switch</text><rect x="-5.00" y="10.00" width="10" height="10" rx="3" fill="#d9d9d9" stroke="#999aa6" stroke-width="1"/><rect x="95.00" y="10.00" width="10" height="10" rx="3" fill="#d9d9d9" stroke="#999aa6" stroke-width="1"/><g transform="translate(72.00,-8.20)"><rect x="0" y="0" width="11" height="11" rx="1.5" fill="#ffcb6b" stroke="#a8261c" stroke-width="1"/><rect x="4.6" y="1.8" width="1.8" height="4.8" fill="#222"/><rect x="4.6" y="7.5" width="1.8" height="1.8" fill="#222"/></g><circle cx="91.80" cy="-3.00" r="5" fill="#00bcff" stroke="#1877a8" stroke-width="0.8"/></g><g transform="translate(630,485)"><rect x="0" y="0" width="180" height="30" rx="5" fill="#e2d96e" stroke="#999aa6" stroke-width="1"/><path d="M5,0.5 L30,0.5 L30,29.5 L5,29.5 Q0.5,29.5 0.5,25 L0.5,5 Q0.5,0.5 5,0.5Z" fill="#000" fill-opacity="0.05"/><line x1="30" y1="0.5" x2="30" y2="29.5" stroke="#000" stroke-opacity="0.1" stroke-width="1"/><path d="M6.9,22.3 L10.9,22.3 L15.3,7.9 L19,7.9" fill="none" stroke="#fff" stroke-width="2.4"/><path d="M6.9,7.9 L10.9,7.9 L12.3,12.5 M13.9,17.6 L15.3,22.3 L19,22.3" fill="none" stroke="#fff" stroke-width="2.4"/><path d="M18.3,3.2 L22.2,8 L18.3,12.8 L19.2,8Z M18.3,17.5 L22.2,22.3 L18.3,27.1 L19.2,22.3Z" fill="#fff"/><text x="38.4" y="19.5" font-size="14" fill="#333" font-style="italic">Redirect the User</text><rect x="-5.00" y="10.00" width="10" height="10" rx="3" fill="#d9d9d9" stroke="#999aa6" stroke-width="1"/><rect x="175.00" y="10.00" width="10" height="10" rx="3" fill="#d9d9d9" stroke="#999aa6" stroke-width="1"/><g transform="translate(152.00,-8.20)"><rect x="0" y="0" width="11" height="11" rx="1.5" fill="#ffcb6b" stroke="#a8261c" stroke-width="1"/><rect x="4.6" y="1.8" width="1.8" height="4.8" fill="#222"/><rect x="4.6" y="7.5" width="1.8" height="1.8" fill="#222"/></g><circle cx="171.80" cy="-3.00" r="5" fill="#00bcff" stroke="#1877a8" stroke-width="0.8"/></g><g transform="translate(870,485)"><rect x="0" y="0" width="120" height="30" rx="5" fill="#21a0ab" stroke="#999aa6" stroke-width="1"/><path d="M90,0.5 L115,0.5 Q119.5,0.5 119.5,5 L119.5,25 Q119.5,29.5 115,29.5 L90,29.5Z" fill="#000" fill-opacity="0.05"/><line x1="90" y1="0.5" x2="90" y2="29.5" stroke="#000" stroke-opacity="0.1" stroke-width="1"/><g transform="translate(90,0)"><circle cx="15.3" cy="14.8" r="8.4" fill="#fff"/><path d="M10.4,14.8 L19.2,14.8 M15.2,10.6 L19.4,14.8 L15.2,19" fill="none" stroke="#21a0ab" stroke-width="2.4" stroke-linejoin="miter"/></g><text x="82.4" y="19.5" font-size="14" fill="#333" text-anchor="end">ui control</text><rect x="-5.00" y="10.00" width="10" height="10" rx="3" fill="#d9d9d9" stroke="#999aa6" stroke-width="1"/><rect x="115.00" y="10.00" width="10" height="10" rx="3" fill="#d9d9d9" stroke="#999aa6" stroke-width="1"/><g transform="translate(92.00,-8.20)"><rect x="0" y="0" width="11" height="11" rx="1.5" fill="#ffcb6b" stroke="#a8261c" stroke-width="1"/><rect x="4.6" y="1.8" width="1.8" height="4.8" fill="#222"/><rect x="4.6" y="7.5" width="1.8" height="1.8" fill="#222"/></g><circle cx="111.80" cy="-3.00" r="5" fill="#00bcff" stroke="#1877a8" stroke-width="0.8"/></g></g></svg>
<div class="a" style="left:242px;top:80.8px;font-size:15.35px;font-weight:bold;color:#4e5e6a;line-height:18px">Flow 1</div>
<svg class="a" style="left:430px;top:68px" width="30" height="25"><circle cx="14.6" cy="11.7" r="5" fill="#00bcff" stroke="#1a86b8" stroke-width="0.8"/></svg>
<svg class="a" style="left:1415px;top:75px" width="60" height="25"><path d="M13.5,6 V19 M7,12.5 H20" stroke="#7a7a85" stroke-width="2.6"/><path d="M45,11 L55,11 L50,16.5Z" fill="#7a7a85"/></svg>
<div class="a" style="left:1460px;top:108px;width:23px;height:759px;background:#fafafe"></div>
<div class="a" style="left:201px;top:844px;width:1259px;height:23px;background:#fafafe"></div>
<svg class="a" style="left:1460px;top:108px" width="23" height="740"><path d="M11.5,13.5 L18.2,22.5 L4.8,22.5Z" fill="#808089" stroke="#808089" stroke-width="1.6" stroke-linejoin="round"/><rect x="5" y="35" width="13" height="54" rx="6.5" fill="#808089"/><path d="M4.8,713.5 L18.2,713.5 L11.5,723Z" fill="#808089" stroke="#808089" stroke-width="1.6" stroke-linejoin="round"/></svg>
<svg class="a" style="left:201px;top:844px" width="1259" height="23"><path d="M12.5,12 L21.5,5.5 L21.5,18.5Z" fill="#808089" stroke="#808089" stroke-width="1.6" stroke-linejoin="round"/><rect x="34" y="5" width="166" height="13" rx="6.5" fill="#808089"/><path d="M1246.5,12 L1237.5,5.5 L1237.5,18.5Z" fill="#808089" stroke="#808089" stroke-width="1.6" stroke-linejoin="round"/></svg>
<div class="a" style="left:212px;top:870px;width:21px;height:21px;background:#fff;border:1px solid #c8c8d4"></div>
<svg class="a" style="left:212px;top:870px" width="21" height="21"><circle cx="9.2" cy="9.4" r="4.6" fill="none" stroke="#555e6a" stroke-width="1.9"/><path d="M12.5,12.7 L16.2,16.4" stroke="#555e6a" stroke-width="2.3" stroke-linecap="round"/></svg>
<div class="a" style="left:1317px;top:870px;width:60px;height:21px;background:#fff;border:1px solid #c8c8d4"></div>
<div class="a" style="left:1382px;top:870px;width:21px;height:21px;background:#fff;border:1px solid #c8c8d4"></div>
<div class="a" style="left:1407px;top:870px;width:65px;height:21px;background:#fff;border:1px solid #c8c8d4"></div><div class="a" style="left:1428px;top:870px;width:1px;height:21px;background:#c8c8d4"></div><div class="a" style="left:1449px;top:870px;width:1px;height:21px;background:#c8c8d4"></div>
<svg class="a" style="left:1317px;top:869.2px" width="160" height="22"><circle cx="10.6" cy="10.5" r="5.9" fill="#6b6b78"/><rect x="9.7" y="6.6" width="1.8" height="4.9" fill="#fff"/><rect x="9.7" y="12.6" width="1.8" height="1.8" fill="#fff"/><text x="20.2" y="15.6" font-size="15" fill="#6b7080" font-family="Liberation Serif">0</text><path d="M31.2,16.4 L38,4.2 L44.8,16.4Z" fill="#c8a800" stroke="#c8a800" stroke-width="0.9" stroke-linejoin="round"/><rect x="37.1" y="7.8" width="1.8" height="4.6" fill="#fff"/><rect x="37.1" y="13.4" width="1.8" height="1.6" fill="#fff"/><text x="47.6" y="15.6" font-size="15" fill="#c8a800" font-family="Liberation Serif">4</text><path d="M68,5.5 L72.5,4.2 L77.5,5.5 L83.5,4.2 L83.5,15.2 L77.5,16.6 L72.5,15.2 L68,16.6Z M72.5,4.2 V15.2 M77.5,5.5 V16.6" fill="none" stroke="#6b7080" stroke-width="1.1"/><path d="M95.8,10.6 H107" stroke="#6b6b78" stroke-width="2.2"/><circle cx="122.2" cy="10.6" r="5.2" fill="none" stroke="#6b6b78" stroke-width="1.9"/><path d="M138,10.6 H149 M143.5,5 V16.2" stroke="#6b6b78" stroke-width="2.3"/></svg>
<div class="a" style="left:1493px;top:68px;width:351px;height:40px;background:#fff;border-bottom:1px solid #bbbbc8"></div>
<div class="a" style="left:1496px;top:72px;width:150px;height:36px;background:#fff;border:1px solid #bbbbc8;border-bottom:none"></div>
<svg class="a" style="left:1509px;top:80px" width="22" height="17"><path d="M1.5,1 V15.3 H20" fill="none" stroke="#8d8d99" stroke-width="1.1"/><rect x="4.6" y="8.6" width="2" height="5.6" fill="#8d8d99"/><rect x="8.2" y="5" width="2" height="9.2" fill="#8d8d99"/><rect x="11.8" y="7.2" width="2" height="7" fill="#8d8d99"/><rect x="15.4" y="3.2" width="2" height="11" fill="#8d8d99"/></svg>
<div class="a" style="left:1531px;top:80px;font-size:15.75px;font-weight:bold;color:#4e5e6a;line-height:18px;white-space:nowrap">Dashboard 2.<span style="color:#8d9aa3">0</span></div>
<div class="a" style="left:1657px;top:73px;width:32px;height:32px;background:#fff;border:1px solid #bbbbc8"></div>
<div class="a" style="left:1695px;top:73px;width:32px;height:32px;background:#fff;border:1px solid #bbbbc8"></div>
<div class="a" style="left:1734px;top:73px;width:31px;height:32px;background:#fff;border:1px solid #bbbbc8"></div>
<div class="a" style="left:1772px;top:73px;width:31px;height:32px;background:#fff;border:1px solid #bbbbc8"></div>
<svg class="a" style="left:1650px;top:68px" width="194" height="40"><circle cx="22.8" cy="15.2" r="2.2" fill="#6b6b78"/><path d="M19.8,18.3 H24.6 V23.9 H25.9 V26.2 H19.8 V23.9 H21.1 V20.2 H19.8Z" fill="#6b6b78"/><path d="M58,13.5 L67,13.5 Q69,13.5 68.6,15.5 L66.5,25.5 Q66,27 64.5,27 L55.5,27 Q53.5,27 54,25 L56,15 Q56.5,13.5 58,13.5Z" fill="#6b6b78"/><path d="M56.5,24.5 L65.5,24.5" stroke="#fff" stroke-width="1"/><path d="M59.5,16.5 L66,16.5 M59,18.8 L65.5,18.8" stroke="#fff" stroke-width="0.8"/><ellipse cx="99" cy="14.5" rx="3.3" ry="2.6" fill="#6b6b78"/><path d="M94,17.5 Q99,15.5 104,17.5 L104.5,22 Q104,27.5 99,27.5 Q94,27.5 93.5,22Z" fill="#6b6b78"/><path d="M99,17 V27" stroke="#fff" stroke-width="0.9"/><path d="M92,14 L94.5,17.5 M106,14 L103.5,17.5 M91,21.5 H94 M107,21.5 H104 M92,27.5 L94.5,24.5 M106,27.5 L103.5,24.5" stroke="#6b6b78" stroke-width="1.2"/></svg>
<svg class="a" style="left:1772px;top:73px" width="32" height="32"><path d="M16.00,8.30 L17.37,8.43 L17.99,10.50 L18.89,10.98 L20.95,10.35 L21.82,11.41 L20.80,13.31 L21.10,14.29 L23.00,15.30 L22.87,16.67 L20.80,17.29 L20.32,18.19 L20.95,20.25 L19.89,21.12 L17.99,20.10 L17.01,20.40 L16.00,22.30 L14.63,22.17 L14.01,20.10 L13.11,19.62 L11.05,20.25 L10.18,19.19 L11.20,17.29 L10.90,16.31 L9.00,15.30 L9.13,13.93 L11.20,13.31 L11.68,12.41 L11.05,10.35 L12.11,9.48 L14.01,10.50 L14.99,10.20Z" fill="#6b6b78"/><circle cx="16" cy="15.3" r="2.6" fill="#fff"/></svg>
<svg class="a" style="left:1815px;top:80px" width="20" height="15"><path d="M6,6 L16,6 L11,11.5Z" fill="#6b6b78"/></svg>
<div class="a" style="left:1493px;top:108px;width:328px;height:43px;background:#f2f3fc;border-bottom:1px solid #d6d6e2"></div>
<div class="a" style="left:1821px;top:108px;width:23px;height:759px;background:#fafafe"></div>
<svg class="a" style="left:1821px;top:108px" width="23" height="759"><path d="M11.5,14 L18.2,23 L4.8,23Z" fill="#808089" stroke="#808089" stroke-width="1.6" stroke-linejoin="round"/><rect x="5" y="36" width="13" height="362" rx="6.5" fill="#808089"/><path d="M4.8,737 L18.2,737 L11.5,746Z" fill="#808089" stroke="#808089" stroke-width="1.6" stroke-linejoin="round"/></svg>
<div class="a" style="left:1505px;top:120px;font-size:15.75px;color:#333;line-height:18px">Dashboard</div>
<div class="a" style="left:1596px;top:118px;width:92px;height:23px;background:#fff;border:1px solid #c4c4d0;border-radius:2px"></div>
<div class="a" style="left:1693px;top:118px;width:117px;height:23px;background:#fff;border:1px solid #c4c4d0;border-radius:2px"></div>
<div class="a" style="left:1602px;top:123.3px;font-size:11.25px;color:#5f6370;line-height:13px;-webkit-text-stroke:0.25px #5f6370;white-space:nowrap">Edit Settings</div>
<div class="a" style="left:1699px;top:123.3px;font-size:11.25px;color:#5f6370;line-height:13px;-webkit-text-stroke:0.25px #5f6370;white-space:nowrap">Open Dashboard</div>
<svg class="a" style="left:1670px;top:122px" width="16" height="16"><path d="M7.00,2.00 L7.98,2.10 L8.30,3.86 L8.89,4.17 L10.54,3.46 L11.16,4.22 L10.14,5.70 L10.33,6.34 L12.00,7.00 L11.90,7.98 L10.14,8.30 L9.83,8.89 L10.54,10.54 L9.78,11.16 L8.30,10.14 L7.66,10.33 L7.00,12.00 L6.02,11.90 L5.70,10.14 L5.11,9.83 L3.46,10.54 L2.84,9.78 L3.86,8.30 L3.67,7.66 L2.00,7.00 L2.10,6.02 L3.86,5.70 L4.17,5.11 L3.46,3.46 L4.22,2.84 L5.70,3.86 L6.34,3.67Z" fill="#5f6370"/><circle cx="7" cy="7" r="1.6" fill="#fff"/></svg>
<svg class="a" style="left:1789px;top:121px" width="18" height="16"><path d="M8.5,3.5 H3 V13 H12.5 V8" fill="none" stroke="#5f6370" stroke-width="1.4"/><path d="M7.5,9 L13.5,3 M10,2.2 H14.3 V6.5" fill="none" stroke="#5f6370" stroke-width="1.5"/></svg>
<div class="a" style="left:1494px;top:189px;width:327px;height:1px;background:#bbbbc8"></div>
<div class="a" style="left:1497px;top:154px;width:101px;height:36px;background:#fff;border:1px solid #bbbbc8;border-bottom:none"></div>
<div class="a" style="left:1605px;top:154px;width:101px;height:36px;background:#e9ebf8;border:1px solid #bbbbc8"></div>
<div class="a" style="left:1713px;top:154px;width:101px;height:36px;background:#e9ebf8;border:1px solid #bbbbc8"></div>
<div class="a" style="left:1512px;top:162px;font-size:15.75px;font-weight:bold;color:#4e5e6a;line-height:18px">Layout</div>
<div class="a" style="left:1620px;top:162px;font-size:15.75px;color:#666b78;line-height:18px">Theming</div>
<div class="a" style="left:1728px;top:162px;font-size:15.75px;color:#666b78;line-height:18px">FF Auth</div>
<div class="a" style="left:1505px;top:201px;font-size:15.75px;font-weight:bold;color:#222;line-height:18px">Pages</div>
<div class="a" style="left:1704px;top:199px;width:23px;height:22px;background:#fff;border:1px solid #c4c4d0;border-radius:2px"></div>
<div class="a" style="left:1731px;top:199px;width:23px;height:22px;background:#fff;border:1px solid #c4c4d0;border-radius:2px"></div>
<div class="a" style="left:1758px;top:199px;width:52px;height:22px;background:#fff;border:1px solid #c4c4d0;border-radius:2px"></div>
<svg class="a" style="left:1704px;top:199px" width="110" height="22"><path d="M8.8,11.2 L11.5,8.7 L14.2,11.2 M8.8,13.8 L11.5,11.3 L14.2,13.8" fill="none" stroke="#5f6370" stroke-width="1.1"/><path d="M35.8,8.5 L38.5,11 L41.2,8.5 M35.8,11.1 L38.5,13.6 L41.2,11.1" fill="none" stroke="#5f6370" stroke-width="1.1"/><path d="M64.7,11 H69.3 M65.5,11 H68.5" stroke="#5f6370" stroke-width="0"/><path d="M60.5,11.2 H69.5 M65,6.8 V15.6" stroke="#5f6370" stroke-width="2.3"/></svg>
<div class="a" style="left:1777px;top:204px;font-size:11.25px;color:#5f6370;line-height:13px;-webkit-text-stroke:0.25px #5f6370">Page</div>
<div class="a" style="left:1505px;top:231.5px;width:310px;font-size:12.02px;font-style:italic;color:#a6a6ad;line-height:18px">Here you can re-order and move your widgets, groups and pages.</div>
<div class="a" style="left:1505px;top:278px;width:305px;height:177px;background:#fff;border:1px solid #c8c8d2;border-top:2px solid #b4b4c0;border-radius:3px"></div>
<div class="a" style="left:1506px;top:322px;width:303px;height:2px;background:#b9b9c6"></div>
<div class="a" style="left:1506px;top:367px;width:303px;height:1px;background:#c8c8d2"></div>
<svg class="a" style="left:1532px;top:297px" width="12" height="8"><path d="M1.5,1.5 L6,6 L10.5,1.5" fill="none" stroke="#444" stroke-width="1.3"/></svg>
<svg class="a" style="left:1550px;top:292px" width="20" height="18"><rect x="2" y="2" width="15" height="13.5" fill="none" stroke="#444" stroke-width="1.3"/><rect x="0.7" y="0.7" width="2.6" height="2.6" fill="#444"/><rect x="15.7" y="0.7" width="2.6" height="2.6" fill="#444"/><rect x="0.7" y="14.2" width="2.6" height="2.6" fill="#444"/><rect x="15.7" y="14.2" width="2.6" height="2.6" fill="#444"/><rect x="5" y="5" width="6" height="5" fill="none" stroke="#444" stroke-width="1.1"/><rect x="8" y="7.5" width="6" height="5" fill="none" stroke="#444" stroke-width="1.1"/></svg>
<div class="a" style="left:1575px;top:291.5px;font-size:15.75px;color:#333;line-height:18px;white-space:nowrap">home <span style="font-size:13.5px;color:#9a9aa2;position:relative;top:-1.2px;margin-left:2px">0 Groups</span></div>
<div class="a" style="left:1738px;top:290.5px;width:24px;height:21px;background:#fff;border:1px solid #c4c4d0;border-radius:2px"></div><div class="a" style="left:1767px;top:290.5px;width:24px;height:21px;background:#fff;border:1px solid #c4c4d0;border-radius:2px"></div><svg class="a" style="left:1738px;top:290.5px" width="54" height="21"><path d="M5.5,10.5 Q11.5,3.8 17.5,10.5 Q11.5,17.2 5.5,10.5Z" fill="#6b6b78"/><circle cx="11.5" cy="10.5" r="2.1" fill="#fff"/><circle cx="11.5" cy="10.5" r="1" fill="#6b6b78"/><rect x="35" y="10" width="8" height="6" fill="#6b6b78"/><path d="M40.5,10 V7.5 Q40.5,5.3 42.8,5.3 Q45,5.3 45,7.5 V8.5" fill="none" stroke="#6b6b78" stroke-width="1.5"/></svg>
<svg class="a" style="left:1532px;top:342px" width="12" height="8"><path d="M1.5,1.5 L6,6 L10.5,1.5" fill="none" stroke="#444" stroke-width="1.3"/></svg>
<svg class="a" style="left:1550px;top:337px" width="20" height="18"><rect x="2" y="2" width="15" height="13.5" fill="none" stroke="#444" stroke-width="1.3"/><rect x="0.7" y="0.7" width="2.6" height="2.6" fill="#444"/><rect x="15.7" y="0.7" width="2.6" height="2.6" fill="#444"/><rect x="0.7" y="14.2" width="2.6" height="2.6" fill="#444"/><rect x="15.7" y="14.2" width="2.6" height="2.6" fill="#444"/><rect x="5" y="5" width="6" height="5" fill="none" stroke="#444" stroke-width="1.1"/><rect x="8" y="7.5" width="6" height="5" fill="none" stroke="#444" stroke-width="1.1"/></svg>
<div class="a" style="left:1575px;top:336.5px;font-size:15.75px;color:#333;line-height:18px;white-space:nowrap">Admin View <span style="font-size:13.5px;color:#9a9aa2;position:relative;top:-1.2px;margin-left:2.5px">1 Groups</span></div>
<div class="a" style="left:1738px;top:335.5px;width:24px;height:21px;background:#fff;border:1px solid #c4c4d0;border-radius:2px"></div><div class="a" style="left:1767px;top:335.5px;width:24px;height:21px;background:#fff;border:1px solid #c4c4d0;border-radius:2px"></div><svg class="a" style="left:1738px;top:335.5px" width="54" height="21"><path d="M5.5,10.5 Q11.5,3.8 17.5,10.5 Q11.5,17.2 5.5,10.5Z" fill="#6b6b78"/><circle cx="11.5" cy="10.5" r="2.1" fill="#fff"/><circle cx="11.5" cy="10.5" r="1" fill="#6b6b78"/><path d="M8,15 L15,6" stroke="#fff" stroke-width="1.2"/><rect x="35" y="10" width="8" height="6" fill="#6b6b78"/><path d="M40.5,10 V7.5 Q40.5,5.3 42.8,5.3 Q45,5.3 45,7.5 V8.5" fill="none" stroke="#6b6b78" stroke-width="1.5"/></svg>
<svg class="a" style="left:1560px;top:385px" width="12" height="8"><path d="M1.5,1.5 L6,6 L10.5,1.5" fill="none" stroke="#444" stroke-width="1.3"/></svg>
<svg class="a" style="left:1576px;top:380px" width="18" height="16"><rect x="1.5" y="2" width="14" height="12" fill="none" stroke="#444" stroke-width="1.2"/><path d="M1.5,5.2 H15.5" stroke="#444" stroke-width="2.2"/><path d="M1.5,8.5 H15.5 M1.5,11.3 H15.5 M6.2,4 V14 M10.8,4 V14" stroke="#444" stroke-width="1"/></svg>
<div class="a" style="left:1598px;top:379px;font-size:15.75px;color:#333;line-height:18px;white-space:nowrap">Admin <span style="font-size:13.5px;color:#9a9aa2;position:relative;top:-1.2px;margin-left:3px">1 Widgets</span></div>
<div class="a" style="left:1738px;top:378.5px;width:24px;height:21px;background:#fff;border:1px solid #c4c4d0;border-radius:2px"></div><div class="a" style="left:1767px;top:378.5px;width:24px;height:21px;background:#fff;border:1px solid #c4c4d0;border-radius:2px"></div><svg class="a" style="left:1738px;top:378.5px" width="54" height="21"><path d="M5.5,10.5 Q11.5,3.8 17.5,10.5 Q11.5,17.2 5.5,10.5Z" fill="#6b6b78"/><circle cx="11.5" cy="10.5" r="2.1" fill="#fff"/><circle cx="11.5" cy="10.5" r="1" fill="#6b6b78"/><rect x="35" y="10" width="8" height="6" fill="#6b6b78"/><path d="M40.5,10 V7.5 Q40.5,5.3 42.8,5.3 Q45,5.3 45,7.5 V8.5" fill="none" stroke="#6b6b78" stroke-width="1.5"/></svg>
<svg class="a" style="left:1595px;top:423px" width="20" height="16"><rect x="1.5" y="1.5" width="16" height="13" fill="none" stroke="#444" stroke-width="1.4"/><circle cx="6" cy="5.5" r="1.6" fill="#444"/><path d="M3,13 L8,8 L10.5,10 L13.5,6.5 L16.5,10.5 V13Z" fill="#444"/></svg>
<div class="a" style="left:1620px;top:423px;font-size:15.75px;color:#333;line-height:18px;white-space:nowrap">Admin page content (m…</div>
<div class="a" style="left:1486px;top:451px;width:4px;height:56px;background:#c0c0cc"></div>
</div></body></html>
